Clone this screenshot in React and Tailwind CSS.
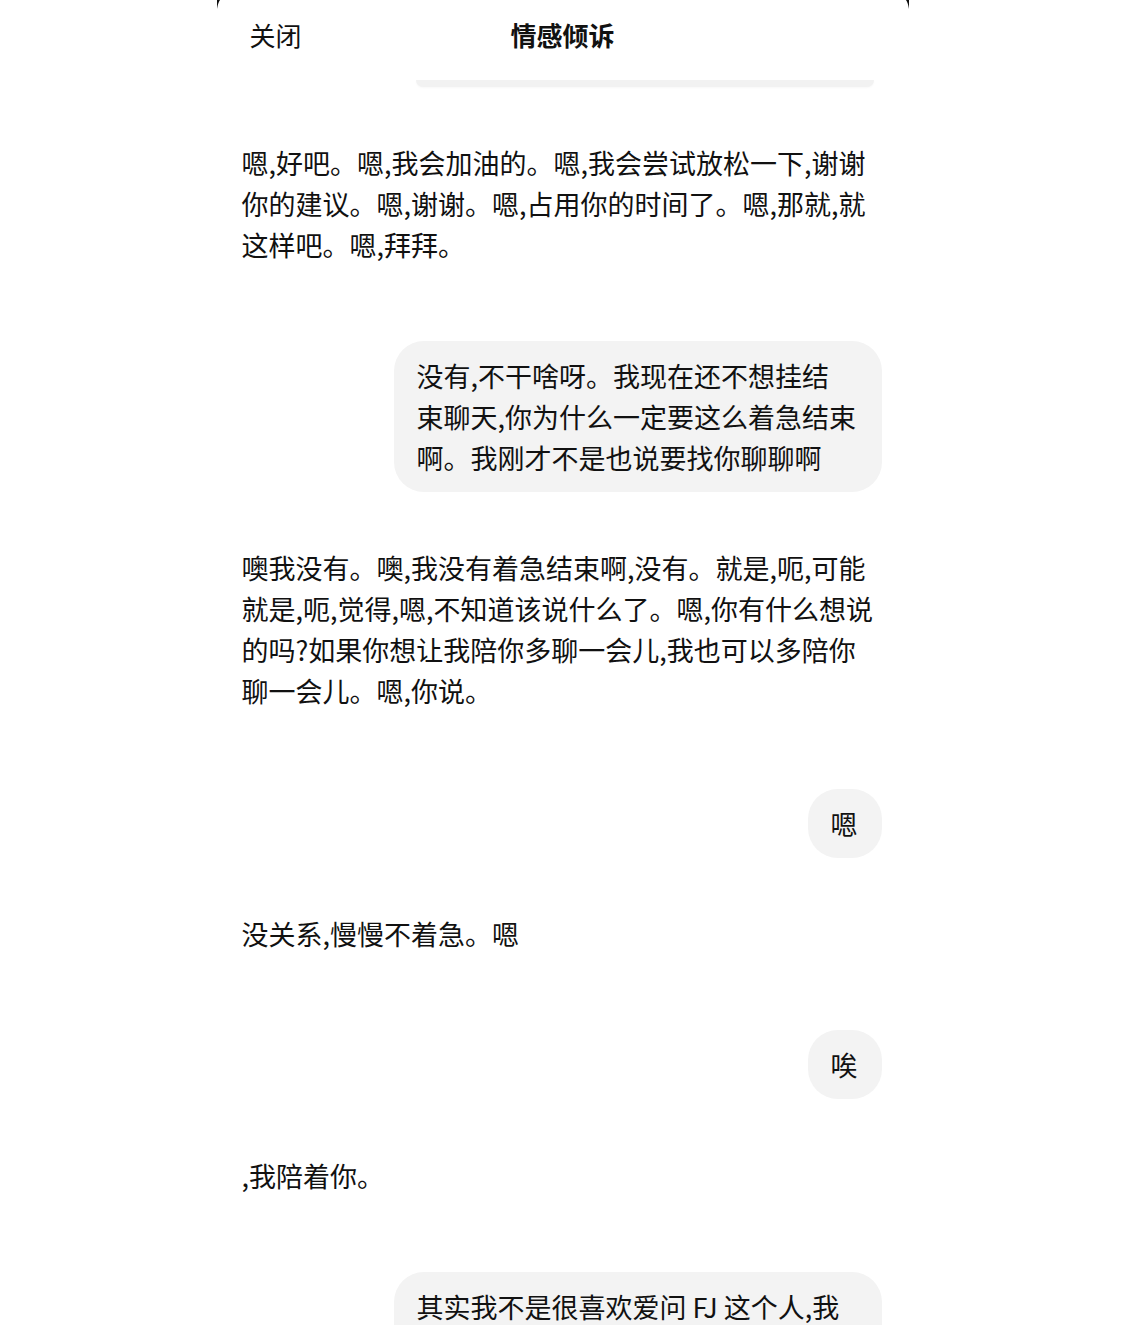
import React from 'react';

const font = { fontFamily: '"Noto Sans CJK SC", "Noto Sans", sans-serif' };

const messages = [
  { from: 'ai', gap: 'mt-[55px]', lines: ['嗯,好吧。嗯,我会加油的。嗯,我会尝试放松一下,谢谢', '你的建议。嗯,谢谢。嗯,占用你的时间了。嗯,那就,就', '这样吧。嗯,拜拜。'] },
  { from: 'me', gap: 'mt-[76px]', wide: true, lines: ['没有,不干啥呀。我现在还不想挂结', '束聊天,你为什么一定要这么着急结束', '啊。我刚才不是也说要找你聊聊啊'] },
  { from: 'ai', gap: 'mt-[55px]', lines: ['噢我没有。噢,我没有着急结束啊,没有。就是,呃,可能', '就是,呃,觉得,嗯,不知道该说什么了。嗯,你有什么想说', '的吗?如果你想让我陪你多聊一会儿,我也可以多陪你', '聊一会儿。嗯,你说。'] },
  { from: 'me', gap: 'mt-[78px]', lines: ['嗯'] },
  { from: 'ai', gap: 'mt-[55px]', lines: ['没关系,慢慢不着急。嗯'] },
  { from: 'me', gap: 'mt-[76px]', lines: ['唉'] },
  { from: 'ai', gap: 'mt-[56px]', lines: [',我陪着你。'] },
  { from: 'me', gap: 'mt-[76px]', wide: true, cut: true, lines: ['其实我不是很喜欢爱问 FJ 这个人,我'] },
];

const Corner = ({ side }) => (
  <svg
    width="6"
    height="18"
    viewBox="0 0 6 18"
    className={`absolute top-0 ${side === 'left' ? 'left-[-1px]' : 'right-[-1px] -scale-x-100'}`}
  >
    <path d="M0 0 L4 0 Q1 4 0 18 Z" fill="#111" />
  </svg>
);

const Message = ({ m }) => {
  if (m.from === 'ai') {
    return (
      <div className={`${m.gap} -ml-[2px] text-[27px] leading-[41px] text-[#111] whitespace-nowrap`}>
        {m.lines.map((l, i) => <div key={i}>{l}</div>)}
      </div>
    );
  }
  return (
    <div className={`${m.gap} flex justify-end`}>
      <div
        className={`bg-[#f3f3f3] rounded-[30px] pl-[23px] pr-6 pt-[14px] ${m.cut ? 'pb-[60px]' : 'pb-[14px]'} ${m.wide ? 'w-[488px]' : ''} text-[27px] leading-[41px] text-[#111] whitespace-nowrap`}
      >
        {m.lines.map((l, i) => <div key={i}>{l}</div>)}
      </div>
    </div>
  );
};

export default function App() {
  return (
    <div className="w-full h-[1333px] bg-white" style={font}>
      <div className="relative mx-auto w-[692px] h-[1325px] overflow-hidden bg-white">
        <Corner side="left" />
        <Corner side="right" />

        {/* header */}
        <div className="h-[80px] pb-[12px] grid grid-cols-[1fr_auto_1fr] items-center px-[33px]">
          <span className="text-[26px] text-[#111]">关闭</span>
          <span className="text-[26px] font-bold text-[#111]">情感倾诉</span>
          <span />
        </div>

        {/* tail of the previous bubble, scrolled under the header */}
        <div className="ml-[199px] mr-[35px] h-[7px] bg-[#f2f2f2] rounded-b-[10px] shadow-[0_1px_2px_rgba(0,0,0,0.03)]" />

        <div className="px-[27px]">
          {messages.map((m, i) => <Message key={i} m={m} />)}
        </div>
      </div>
    </div>
  );
}
